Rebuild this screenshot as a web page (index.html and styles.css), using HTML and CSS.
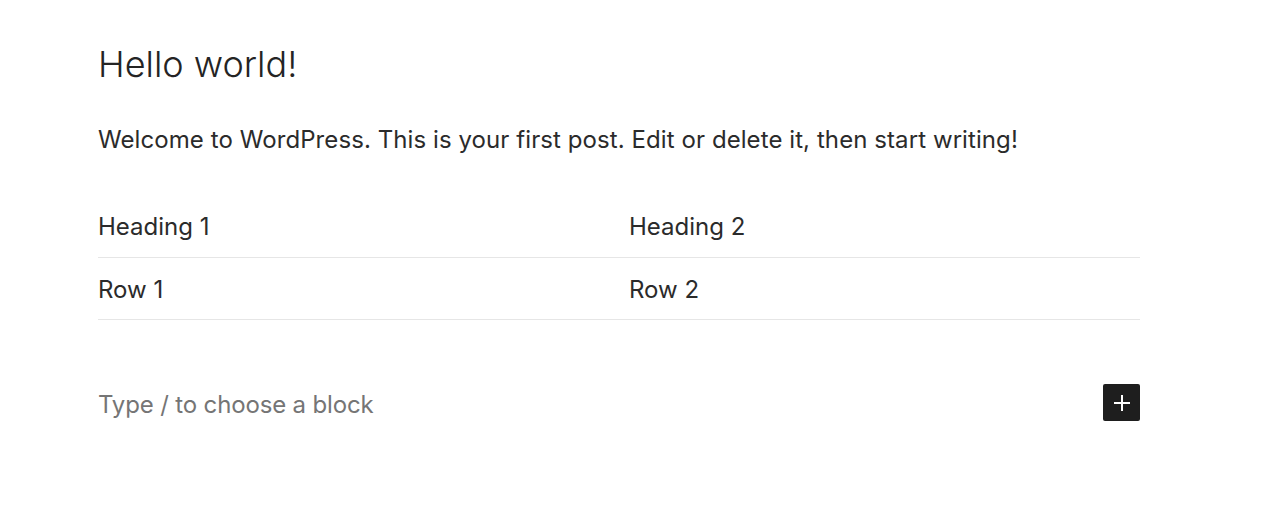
FILE: index.html
```html
<!DOCTYPE html>
<html>
<head>
<meta charset="utf-8">
<link rel="stylesheet" href="styles.css">
</head>
<body>
<main class="editor">
  <h1 class="title">Hello world!</h1>
  <p class="para">Welcome to WordPress. This is your first post. Edit or delete it, then start writing!</p>
  <table class="tbl">
    <thead>
      <tr><th class="c1">Heading 1</th><th>Heading 2</th></tr>
    </thead>
    <tbody>
      <tr><td class="c1">Row 1</td><td>Row 2</td></tr>
    </tbody>
  </table>
  <div class="appender">
    <span class="placeholder">Type / to choose a block</span>
    <button class="add" aria-label="Add block">
      <svg width="24" height="24" viewBox="0 0 24 24"><path d="M11 4h2v7h7v2h-7v7h-2v-7H4v-2h7z" fill="#fff"/></svg>
    </button>
  </div>
</main>
</body>
</html>
```

FILE: styles.css
```css
html, body { margin: 0; padding: 0; background: #fff; }
body { font-family: "Inter", "Liberation Sans", sans-serif; color: #2b2b2b; }
.editor { width: 1042px; margin-left: 98px; padding-top: 40px; }
.title { font-size: 36px; font-weight: 300; margin: 0; line-height: 48px; color: #242424; }
.para { font-size: 24px; margin: 34px 0 0; line-height: 36px; letter-spacing: 0.08px; }
.tbl { width: 100%; border-collapse: collapse; margin-top: 38px; font-size: 24px; }
.tbl th, .tbl td { text-align: left; font-weight: 400; padding: 12px 0 11px; line-height: 38px; border-bottom: 1px solid #e6e6e6; }
.tbl td { padding: 13px 0 10px; }
.tbl .c1 { width: 531px; }
.appender { display: flex; align-items: center; justify-content: space-between; margin-top: 64px; }
.placeholder { font-size: 24px; color: #757575; letter-spacing: -0.15px; padding-top: 4px; }
.add { width: 37px; height: 37px; background: #1e1e1e; border: none; border-radius: 2px; display: flex; align-items: center; justify-content: center; padding: 0; }
```
